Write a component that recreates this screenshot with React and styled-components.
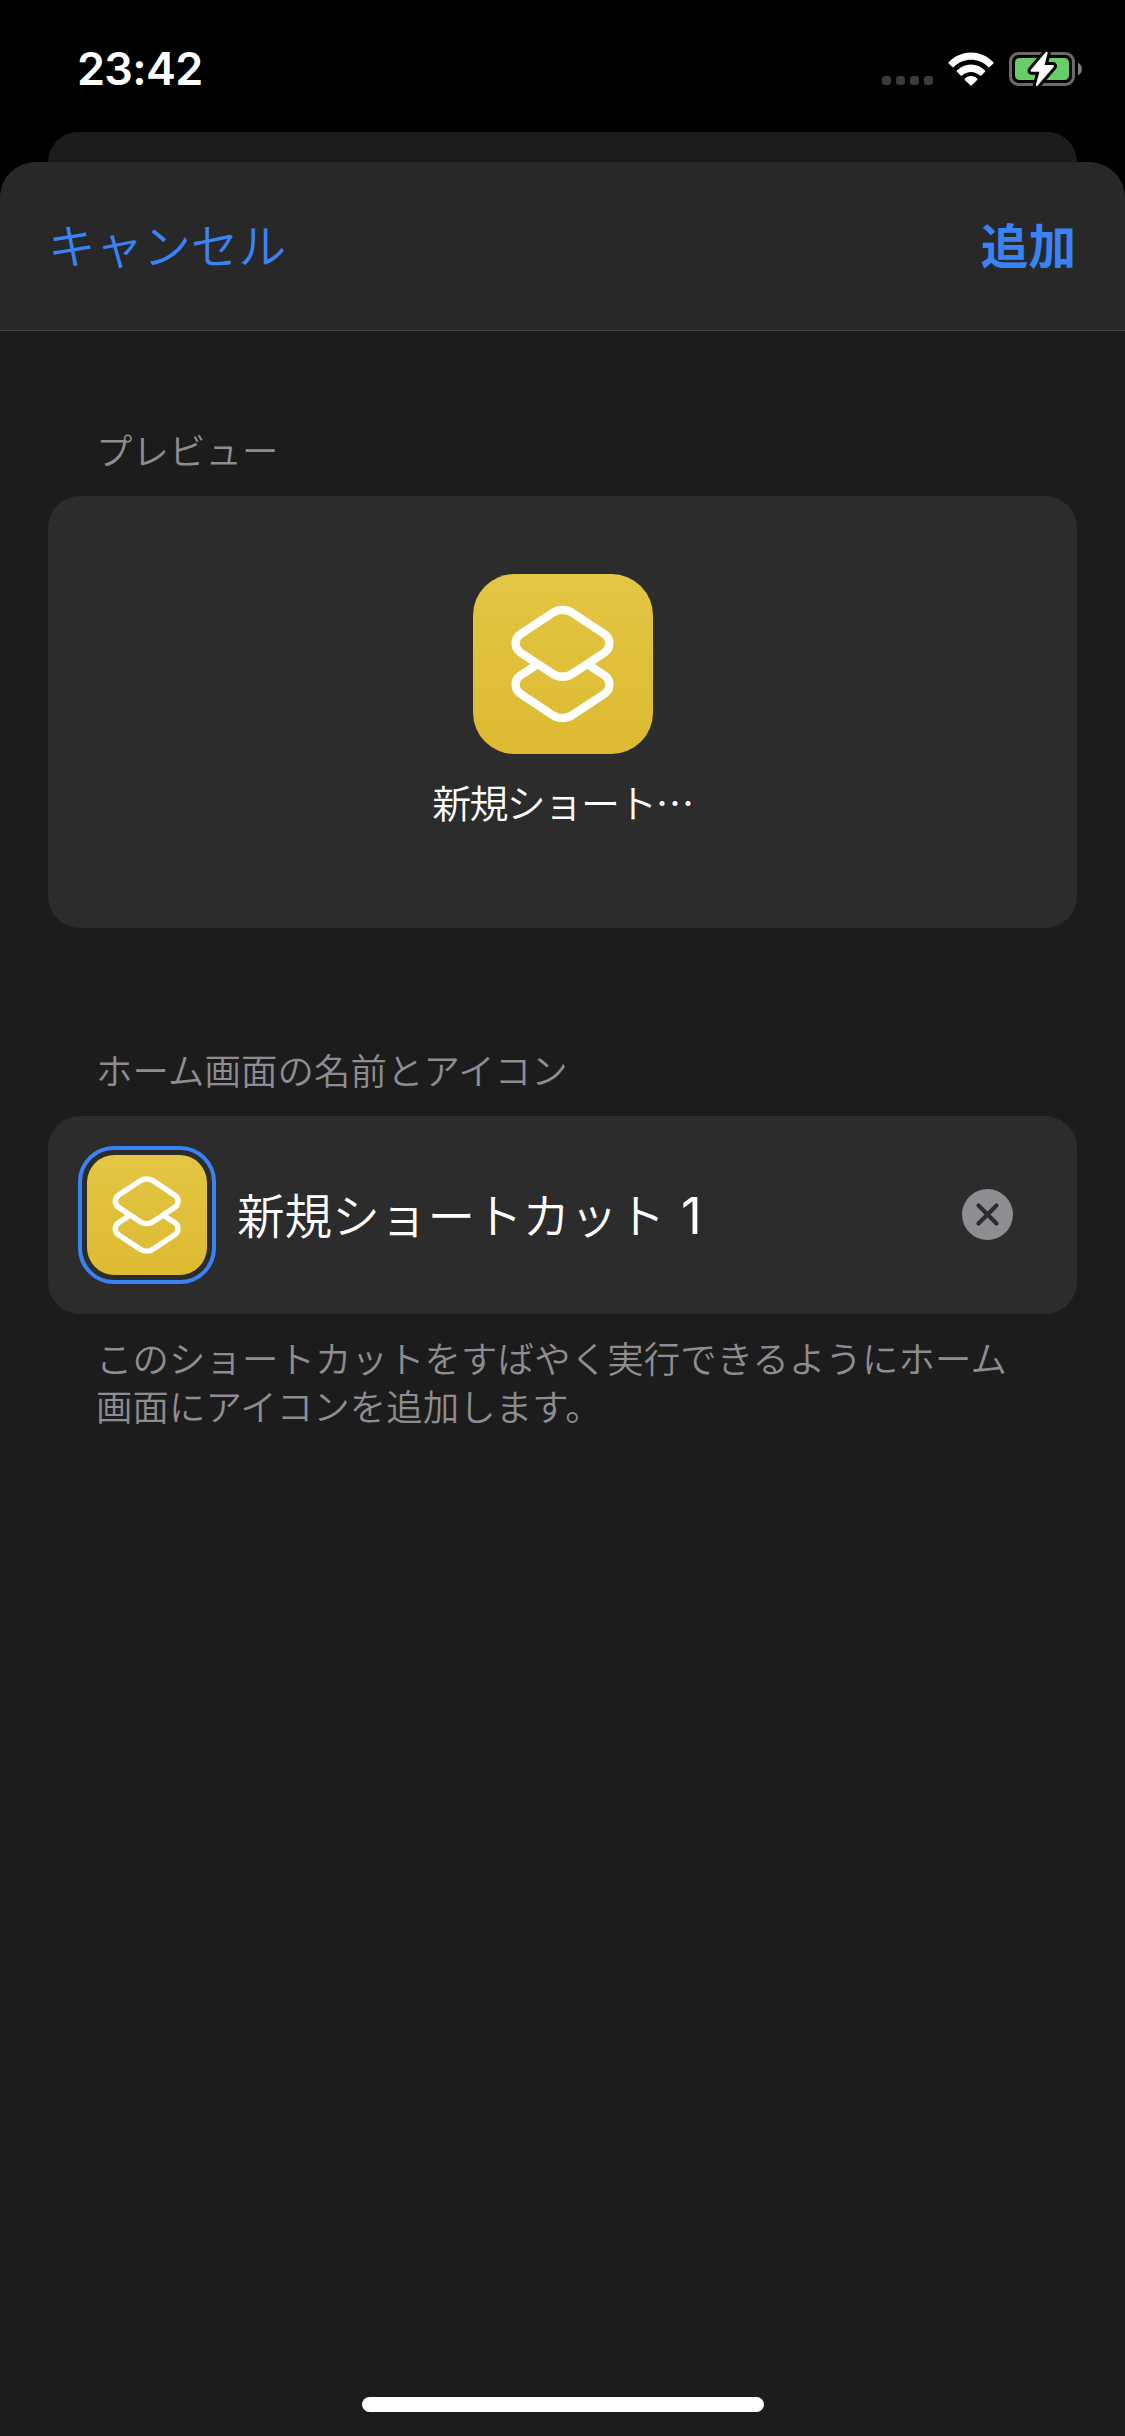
import React from "react";
import styled, { createGlobalStyle } from "styled-components";

const Global = createGlobalStyle`
  html, body { margin: 0; background: #000; }
  * { box-sizing: border-box; }
`;

const BLUE = "#3a83f7";
const GRAY = "#8e8d92";

const Screen = styled.div`
  width: 1125px;
  height: 2436px;
  overflow: hidden;
  display: flex;
  flex-direction: column;
  background: #000;
  font-family: "Noto Sans CJK JP", sans-serif;
  font-weight: 350;
`;

const StatusBar = styled.header`
  height: 132px;
  flex: none;
  display: flex;
  justify-content: space-between;
  padding: 42px 42px 0 77px;
`;

const Time = styled.span`
  font: 600 45px/54px Inter, sans-serif;
  letter-spacing: -0.7px;
  color: #fff;
`;

const StatusIcons = styled.div`
  display: flex;
  height: 54px;
  align-items: center;
`;

const Dots = styled.div`
  display: flex;
  gap: 5px;
  margin: 23px 14px 0 0;
`;

const Dot = styled.i`
  width: 9px;
  height: 9px;
  border-radius: 3px;
  background: #3b3b38;
`;

const WifiSvg = styled.svg`
  width: 48px;
  height: 36px;
  margin-right: 12px;
`;

const BatterySvg = styled.svg`
  width: 76px;
  height: 40px;
`;

const BackSheet = styled.div`
  height: 30px;
  flex: none;
  margin: 0 48px;
  border-radius: 30px 30px 0 0;
  background: #1c1c1c;
`;

const SheetFrame = styled.div`
  flex: 1;
  display: flex;
  flex-direction: column;
  background: #1c1c1c;
  border-radius: 36px 36px 0 0;
  overflow: hidden;
`;

const NavBar = styled.nav`
  height: 169px;
  flex: none;
  display: flex;
  align-items: center;
  justify-content: space-between;
  padding: 0 49px 5px 48px;
  background: #282828;
  border-bottom: 1px solid #414142;
`;

const NavButton = styled.button`
  border: 0;
  padding: 0;
  background: none;
  color: ${BLUE};
  font-family: inherit;
  font-size: 47.6px;
  line-height: 60px;
  font-weight: ${(p) => (p.$strong ? 700 : 350)};
`;

const Content = styled.main`
  flex: 1;
  display: flex;
  flex-direction: column;
  padding: 94px 48px 0;
`;

const SectionLabel = styled.h2`
  margin: 0;
  padding-left: 48px;
  height: 71px;
  font-size: 36.4px;
  letter-spacing: 0.12px;
  line-height: 48px;
  font-weight: 350;
  color: ${GRAY};
`;

const PreviewCard = styled.section`
  height: 432px;
  display: flex;
  flex-direction: column;
  align-items: center;
  padding-top: 78px;
  margin-bottom: 117px;
  border-radius: 32px;
  background: #2c2c2c;
`;

const PreviewName = styled.span`
  margin-top: 23px;
  font-size: 39px;
  line-height: 48px;
  letter-spacing: -1.8px;
  color: #fff;
  white-space: nowrap;
`;

const NameCard = styled.section`
  height: 198px;
  display: flex;
  align-items: center;
  padding: 0 64px 0 30px;
  border-radius: 32px;
  background: #2c2c2c;
`;

const IconRing = styled.button`
  width: 138px;
  height: 138px;
  padding: 5px;
  border: 4px solid ${BLUE};
  border-radius: 36px;
  background: none;
  display: flex;
`;

const NameText = styled.span`
  flex: 1;
  margin: 0 0 0 21px;
  font-size: 47.6px;
  line-height: 60px;
  color: #fff;
  white-space: nowrap;
`;

const Digit = styled.span`
  margin-left: 5px;
  font-family: Inter, sans-serif;
  font-size: 51px;
  font-weight: 400;
`;

const ClearSvg = styled.svg`
  width: 51px;
  height: 51px;
  margin-bottom: 1px;
`;

const Tile = styled.div`
  width: ${(p) => p.$size}px;
  height: ${(p) => p.$size}px;
  border-radius: ${(p) => p.$size * 0.23}px;
  background: linear-gradient(#e3c644, #ddba31);
  display: flex;
  flex: none;
`;

const Footnote = styled.p`
  margin: 19px 0 0;
  padding: 0 48px;
  font-size: 36.4px;
  letter-spacing: 0.12px;
  line-height: 48px;
  color: ${GRAY};
`;

const HomeIndicator = styled.div`
  width: 402px;
  height: 15px;
  border-radius: 8px;
  margin: auto auto 24px;
  background: #fff;
`;

function ShortcutIcon({ size }) {
  return (
    <Tile $size={size}>
      <svg width={size} height={size} viewBox="0 0 180 180" fill="none" stroke="#fff" strokeWidth="8.2">
        <path d="M80 38.6C85.5 35 93.5 35 99 38.6L131.8 60.3C138 64.5 138 74.1 131.8 78.3L99 100C93.5 103.6 85.5 103.6 80 100L47.2 78.3C41 74.1 41 64.5 47.2 60.3Z" />
        <path d="M64.9 90L47.2 101.6C41 105.8 41 115.4 47.2 119.6L80 141.3C85.5 144.9 93.5 144.9 99 141.3L131.8 119.6C138 115.4 138 105.8 131.8 101.6L114.1 90" />
      </svg>
    </Tile>
  );
}

function Wifi() {
  return (
    <WifiSvg viewBox="0 0 48 36" fill="#fff">
      <path d="M1.6 11.2C14-1.9 34-1.9 46.4 11.2a1 1 0 0 1 0 1.2L42.6 16.1a1 1 0 0 1-1.3 0C31.5 6.4 16.5 6.4 6.7 16.1a1 1 0 0 1-1.3 0L1.6 12.4a1 1 0 0 1 0-1.2Z" />
      <path d="M9.9 19.5C17.7 11.4 30.3 11.4 38.1 19.5a1 1 0 0 1 0 1.2L34.3 24.4a1 1 0 0 1-1.3 0C28 19.7 20 19.7 15 24.4a1 1 0 0 1-1.3 0L9.9 20.7a1 1 0 0 1 0-1.2Z" />
      <path d="M17.8 27.6C21.2 24.1 26.8 24.1 30.2 27.6a1 1 0 0 1 0 1.3L24.7 34.3a1 1 0 0 1-1.4 0L17.8 28.9a1 1 0 0 1 0-1.3Z" />
    </WifiSvg>
  );
}

function Battery() {
  const bolt = "M38.6 3.2L23.9 20.8Q22.8 22.6 24.8 22.8H32.4L28.9 35.8Q29 37.8 30.5 36.8L46.6 18Q47.8 16.3 45.8 16H37.6L40.7 4Q40.4 2 38.6 3.2Z";
  return (
    <BatterySvg viewBox="0 0 76 40">
      <rect x="3.5" y="4.5" width="63" height="31" rx="8" fill="none" stroke="#6a6a6a" strokeWidth="3" />
      <rect x="8" y="9" width="54" height="22" rx="4.5" fill="#67ce67" />
      <path d="M71 13.7C76.2 15.5 76.2 24.5 71 26.3Z" fill="#7e7e7e" />
      <path d={bolt} fill="#000" stroke="#000" strokeWidth="6" strokeLinejoin="round" />
      <path d={bolt} fill="#fff" />
    </BatterySvg>
  );
}

export default function App() {
  return (
    <Screen>
      <Global />
      <StatusBar>
        <Time>23:42</Time>
        <StatusIcons>
          <Dots><Dot /><Dot /><Dot /><Dot /></Dots>
          <Wifi />
          <Battery />
        </StatusIcons>
      </StatusBar>
      <BackSheet />
      <SheetFrame>
        <NavBar>
          <NavButton>キャンセル</NavButton>
          <NavButton $strong>追加</NavButton>
        </NavBar>
        <Content>
          <SectionLabel>プレビュー</SectionLabel>
          <PreviewCard>
            <ShortcutIcon size={180} />
            <PreviewName>新規ショート⋯</PreviewName>
          </PreviewCard>
          <SectionLabel>ホーム画面の名前とアイコン</SectionLabel>
          <NameCard>
            <IconRing aria-label="アイコン">
              <ShortcutIcon size={120} />
            </IconRing>
            <NameText>新規ショートカット <Digit>1</Digit></NameText>
            <ClearSvg viewBox="0 0 51 51">
              <circle cx="25.5" cy="25.5" r="25.5" fill={GRAY} />
              <path d="M16.5 16.5L34.5 34.5M34.5 16.5L16.5 34.5" stroke="#2c2c2c" strokeWidth="4.2" strokeLinecap="round" />
            </ClearSvg>
          </NameCard>
          <Footnote>
            このショートカットをすばやく実行できるようにホーム画面にアイコンを追加します。
          </Footnote>
          <HomeIndicator />
        </Content>
      </SheetFrame>
    </Screen>
  );
}
